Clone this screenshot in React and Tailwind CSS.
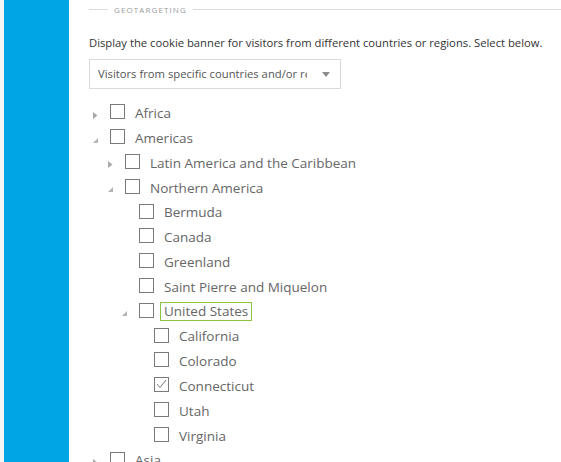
import React from "react";

const rows = [
  { label: "Africa", level: 0, arrow: "right" },
  { label: "Americas", level: 0, arrow: "down" },
  { label: "Latin America and the Caribbean", level: 1, arrow: "right" },
  { label: "Northern America", level: 1, arrow: "down" },
  { label: "Bermuda", level: 2 },
  { label: "Canada", level: 2 },
  { label: "Greenland", level: 2 },
  { label: "Saint Pierre and Miquelon", level: 2 },
  { label: "United States", level: 2, arrow: "down", focus: true },
  { label: "California", level: 3 },
  { label: "Colorado", level: 3 },
  { label: "Connecticut", level: 3, checked: true },
  { label: "Utah", level: 3 },
  { label: "Virginia", level: 3 },
  { label: "Asia", level: 0, arrow: "right" },
];

const indent = ["pl-0", "pl-[15px]", "pl-[29px]", "pl-[44px]"];

function Arrow({ dir }) {
  if (dir === "right")
    return (
      <svg width="5" height="7" viewBox="0 0 5 7" className="mt-[4px]">
        <polygon points="0,0 4.5,3.5 0,7" fill="#a8a8a8" />
      </svg>
    );
  if (dir === "down")
    return (
      <svg width="5" height="5" viewBox="0 0 5 5" className="mt-[4px]">
        <polygon points="5,0 5,5 0,5" fill="#b4b4b4" />
      </svg>
    );
  return null;
}

function Row({ r }) {
  return (
    <div className={`flex items-center h-[24.8px] ${indent[r.level]}`}>
      <div className="w-[21px] h-full flex items-center pl-[4px]">
        <Arrow dir={r.arrow} />
      </div>
      <div className="w-[15px] h-[15px] border border-[#7a7a7a] bg-white mt-[-3px] shrink-0 flex items-center justify-center">
        {r.checked && (
          <svg width="13" height="13" viewBox="0 0 13 13">
            <polyline points="2,6 5,9.5 11,2" fill="none" stroke="#7a7a7a" strokeWidth="1" />
          </svg>
        )}
      </div>
      {r.focus ? (
        <span className="ml-[6px] border border-[#8cc63f] px-[3px] leading-[17px] text-[13.5px] text-[#666] whitespace-nowrap">
          {r.label}
        </span>
      ) : (
        <span className="ml-[10px] text-[13.5px] text-[#666] whitespace-nowrap">{r.label}</span>
      )}
    </div>
  );
}

export default function App() {
  return (
    <div
      className="flex w-[561px] h-[462px] overflow-hidden bg-white"
      style={{ fontFamily: '"Open Sans", "Noto Sans", sans-serif' }}
    >
      <div className="w-[4px] shrink-0 bg-[#f5f5f5]" />
      <div className="w-[65px] shrink-0 bg-[#00a5e6]" />
      <div className="flex-1 pl-[20px]">
        <div className="flex items-center h-[19px]">
          <div className="w-[19px] h-px bg-[#dcdcdc]" />
          <span className="mx-[6px] text-[8px] tracking-[1.1px] text-[#9a9a9a] leading-none">GEOTARGETING</span>
          <div className="flex-1 h-px bg-[#dcdcdc]" />
        </div>
        <p className="mt-[16px] text-[11.25px] text-[#333] leading-[16px] whitespace-nowrap">
          Display the cookie banner for visitors from different countries or regions. Select below.
        </p>
        <div className="mt-[8px] w-[252px] h-[30px] border border-[#dadada] flex items-center pl-[8px] pr-[10px]">
          <span className="flex-1 overflow-hidden whitespace-nowrap text-[11.25px] text-[#555]">
            Visitors from specific countries and/or regions
          </span>
          <svg width="8" height="5" viewBox="0 0 8 5" className="ml-[15px] shrink-0">
            <polygon points="0,0 8,0 4,5" fill="#8a8a8a" />
          </svg>
        </div>
        <div className="mt-[12px]">
          {rows.map((r) => (
            <Row key={r.label} r={r} />
          ))}
        </div>
      </div>
    </div>
  );
}
